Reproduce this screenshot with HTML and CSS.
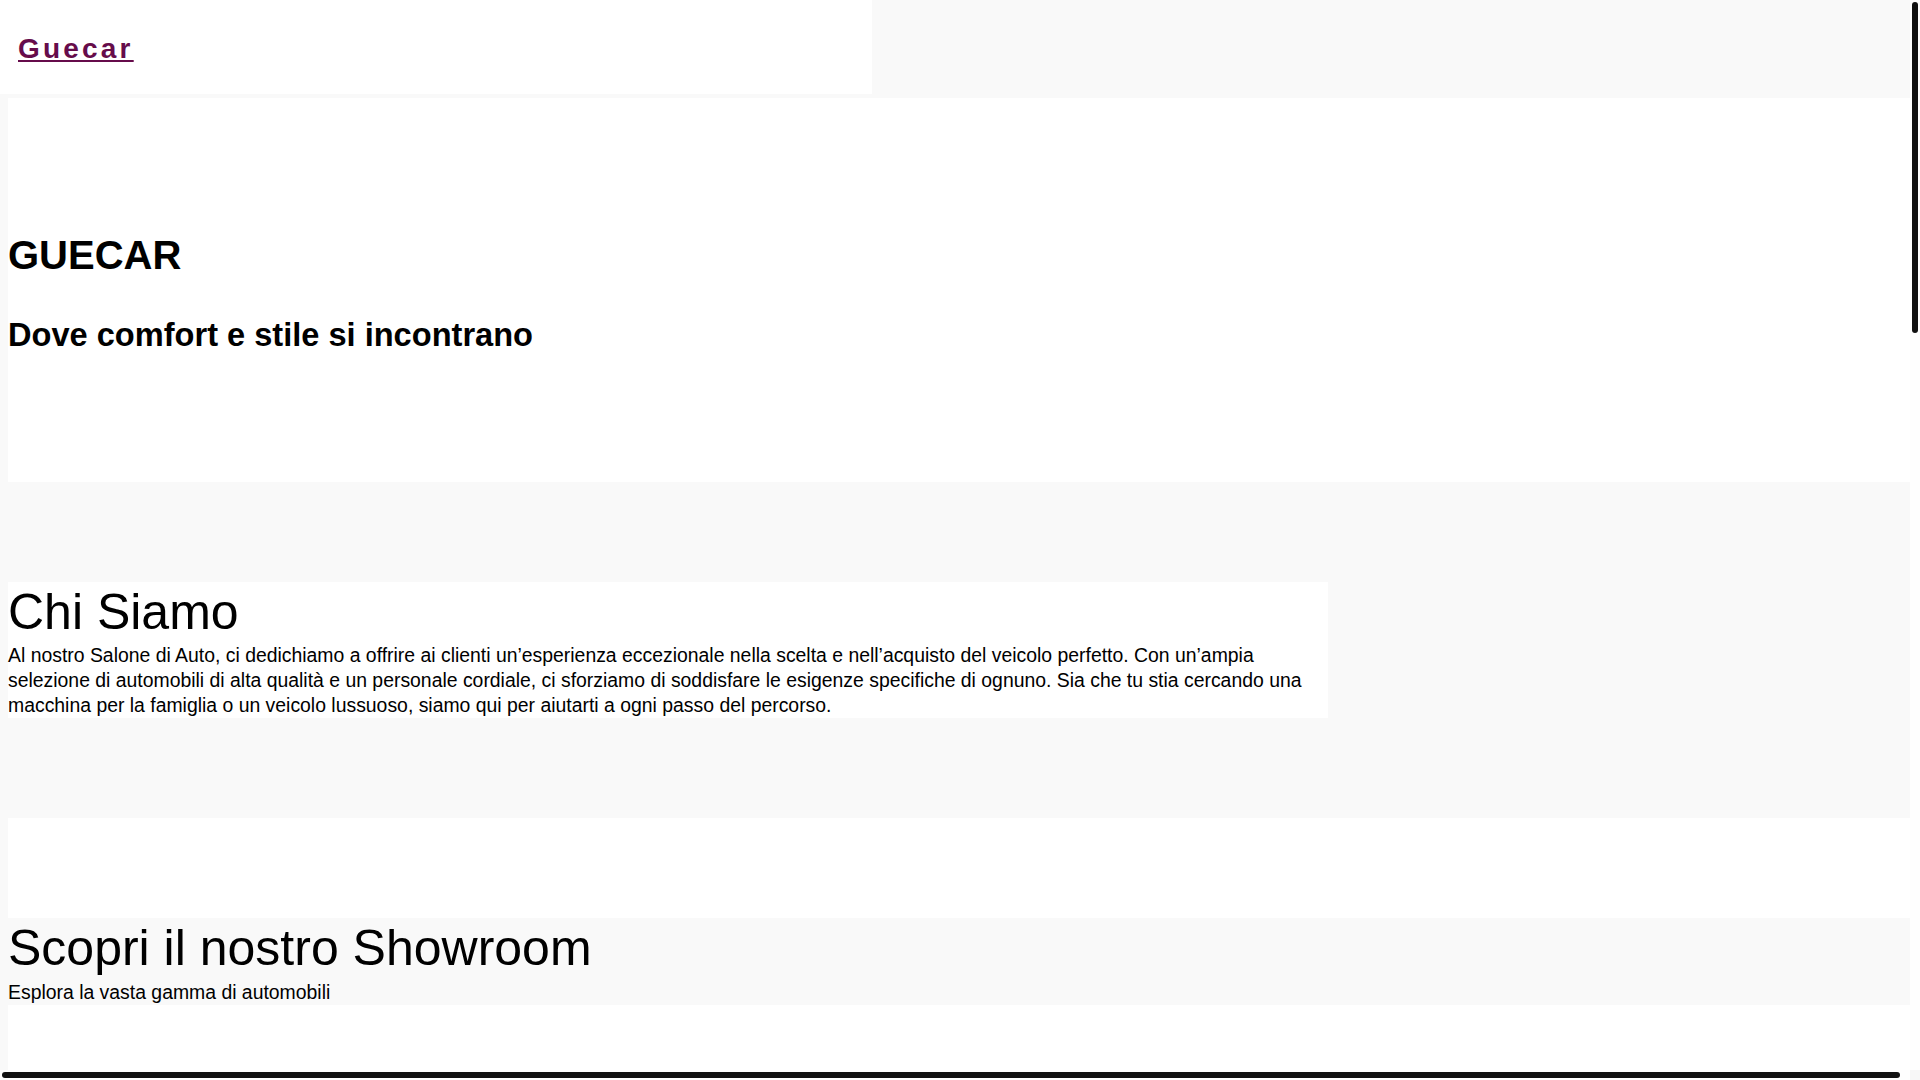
FILE: index.html
```html
<!DOCTYPE html>
<html lang="it">
<head>
<meta charset="utf-8">
<title>Guecar</title>
<link rel="stylesheet" href="styles.css">
</head>
<body>
<header class="site-header">
  <a class="logo" href="#">Guecar</a>
</header>
<main class="main">
  <section class="hero">
    <h1 class="hero-title">GUECAR</h1>
    <h2 class="hero-subtitle">Dove comfort e stile si incontrano</h2>
  </section>
  <section class="about">
    <div class="about-box">
      <h2 class="section-title">Chi Siamo</h2>
      <p class="section-text">Al nostro Salone di Auto, ci dedichiamo a offrire ai clienti un’esperienza eccezionale nella scelta e nell’acquisto del veicolo perfetto. Con un’ampia selezione di automobili di alta qualità e un personale cordiale, ci sforziamo di soddisfare le esigenze specifiche di ognuno. Sia che tu stia cercando una macchina per la famiglia o un veicolo lussuoso, siamo qui per aiutarti a ogni passo del percorso.</p>
    </div>
  </section>
  <section class="showroom">
    <div class="showroom-head">
      <h2 class="section-title">Scopri il nostro Showroom</h2>
      <p class="section-text showroom-lead">Esplora la vasta gamma di automobili</p>
    </div>
    <div class="showroom-grid"></div>
  </section>
</main>
<div class="scrollbar scrollbar-v" aria-hidden="true"><span class="thumb thumb-v"></span></div>
<div class="scrollbar scrollbar-h" aria-hidden="true"><span class="thumb thumb-h"></span></div>
<div class="scrollbar-corner" aria-hidden="true"></div>
</body>
</html>
```
FILE: styles.css
```css
html {
  background: #f9f9f9;
}

body {
  margin: 0;
  background: #f9f9f9;
  font-family: "Liberation Sans", Arial, sans-serif;
  color: #000;
  overflow: hidden;
}

.site-header {
  box-sizing: border-box;
  width: 872px;
  height: 94px;
  margin-bottom: 4px;
  padding: 33px 18px 0;
  background: #fff;
  font-size: 28px;
  line-height: normal;
}

.logo {
  font-weight: 700;
  font-size: 28px;
  letter-spacing: 3.2px;
  color: #660c4b;
  text-decoration: underline;
}

.main {
  width: 100%;
  padding-left: 8px;
}

.hero {
  background: #fff;
  padding: 135px 0 128px;
}

.hero-title {
  margin: 0 0 38px;
  font-size: 40px;
  font-weight: 700;
  line-height: normal;
}

.hero-subtitle {
  margin: 0;
  font-size: 32.6px;
  font-weight: 700;
  line-height: normal;
}

.about {
  padding: 100px 0;
}

.about-box {
  width: 1320px;
  background: #fff;
}

.section-title {
  margin: 0;
  font-size: 50px;
  font-weight: 400;
  line-height: 60.5px;
}

.section-text {
  margin: 0;
  font-size: 19.4px;
  line-height: 25px;
}

.showroom {
  background: #fff;
  padding-top: 100px;
}

.showroom-head {
  background: #f9f9f9;
}

.showroom-lead {
  margin-top: 2px;
}

.showroom-grid {
  min-height: 2415px;
  background: #fff;
}

/* scrollbars as they appear in the captured window */
.scrollbar {
  position: fixed;
  background: #fefefe;
  display: flex;
}

.scrollbar-v {
  top: 0;
  right: 0;
  width: 10px;
  height: 1070px;
  padding: 2px;
  box-sizing: border-box;
  flex-direction: column;
}

.scrollbar-h {
  left: 0;
  bottom: 0;
  width: 1910px;
  height: 10px;
  padding: 2px;
  box-sizing: border-box;
}

.scrollbar-corner {
  position: fixed;
  right: 0;
  bottom: 0;
  width: 10px;
  height: 10px;
  background: #f7f7f7;
}

.thumb {
  display: block;
  background: #111;
  border-radius: 3px;
}

.thumb-v {
  width: 6px;
  height: 331px;
}

.thumb-h {
  width: 1898px;
  height: 6px;
}
```
